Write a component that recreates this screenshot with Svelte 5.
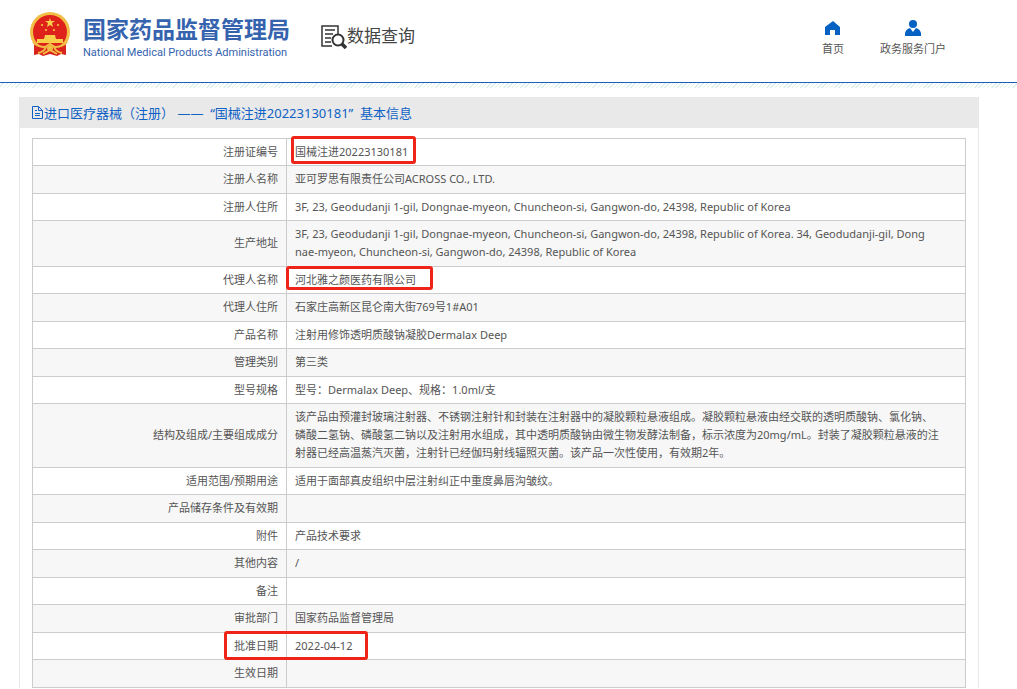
<script lang="ts">
	interface Row {
		label: string;
		value: string;
		mark?: 'number' | 'agent' | 'date';
	}

	const rows: Row[] = [
		{ label: '注册证编号', value: '国械注进20223130181', mark: 'number' },
		{ label: '注册人名称', value: '亚可罗思有限责任公司ACROSS CO., LTD.' },
		{
			label: '注册人住所',
			value: '3F, 23, Geodudanji 1-gil, Dongnae-myeon, Chuncheon-si, Gangwon-do, 24398, Republic of Korea'
		},
		{
			label: '生产地址',
			value:
				'3F, 23, Geodudanji 1-gil, Dongnae-myeon, Chuncheon-si, Gangwon-do, 24398, Republic of Korea. 34, Geodudanji-gil, Dong\nnae-myeon, Chuncheon-si, Gangwon-do, 24398, Republic of Korea'
		},
		{ label: '代理人名称', value: '河北雅之颜医药有限公司', mark: 'agent' },
		{ label: '代理人住所', value: '石家庄高新区昆仑南大街769号1#A01' },
		{ label: '产品名称', value: '注射用修饰透明质酸钠凝胶Dermalax Deep' },
		{ label: '管理类别', value: '第三类' },
		{ label: '型号规格', value: '型号：Dermalax Deep、规格：1.0ml/支' },
		{
			label: '结构及组成/主要组成成分',
			value:
				'该产品由预灌封玻璃注射器、不锈钢注射针和封装在注射器中的凝胶颗粒悬液组成。凝胶颗粒悬液由经交联的透明质酸钠、氯化钠、\n磷酸二氢钠、磷酸氢二钠以及注射用水组成，其中透明质酸钠由微生物发酵法制备，标示浓度为20mg/mL。封装了凝胶颗粒悬液的注\n射器已经高温蒸汽灭菌，注射针已经伽玛射线辐照灭菌。该产品一次性使用，有效期2年。'
		},
		{ label: '适用范围/预期用途', value: '适用于面部真皮组织中层注射纠正中重度鼻唇沟皱纹。' },
		{ label: '产品储存条件及有效期', value: '' },
		{ label: '附件', value: '产品技术要求' },
		{ label: '其他内容', value: '/' },
		{ label: '备注', value: '' },
		{ label: '审批部门', value: '国家药品监督管理局' },
		{ label: '批准日期', value: '2022-04-12', mark: 'date' },
		{ label: '生效日期', value: '' }
	];
</script>

<div class="page">
	<header class="header">
		<div class="brand">
			<svg class="emblem" viewBox="0 0 42 45" aria-hidden="true">
				<path d="M5 30v13l5-1 4 2 7-2 7 2 4-2 5 1V30z" fill="#d9231c" />
				<circle cx="21" cy="20" r="20" fill="#f1bd45" />
				<circle cx="21" cy="20" r="17" fill="#df211b" />
				<path d="m21 6 1 3h4l-3 2 1 4-3-2-3 2 1-4-3-2h4z" fill="#f7cf4a" />
				<g fill="#f7cf4a">
					<circle cx="13" cy="13" r="1" />
					<circle cx="29" cy="13" r="1" />
					<circle cx="17" cy="18" r="1" />
					<circle cx="25" cy="18" r="1" />
					<path d="M16 23h10l1 4h7v4H8v-4h7z" />
				</g>
				<path d="M6 33h30l-4 5-11 3-11-3z" fill="#d9231c" />
				<path
					d="M4 30q5 5 12 5l5-3 5 3q7 0 12-5M9 41q6-1 8-6m8 0q2 5 8 6M14 42l7-4 7 4"
					fill="none"
					stroke="#f1bd45"
					stroke-width="2"
				/>
				<circle cx="21" cy="36" r="3" fill="#f1bd45" />
			</svg>
			<div class="names">
				<span class="name-zh">国家药品监督管理局</span>
				<span class="name-en">National Medical Products Administration</span>
			</div>
		</div>

		<h1 class="section">
			<svg viewBox="0 0 26 25" fill="none" stroke="#333" aria-hidden="true">
				<path d="M17 9V1H1v20h10" stroke-width="1.5" />
				<path d="M4 5h10M4 9h8M4 13h6M4 17h6" stroke-width="1.5" />
				<circle cx="17" cy="15" r="5.5" stroke-width="2" />
				<path d="m21 19 4 4" stroke-width="3.5" />
			</svg>
			<span>数据查询</span>
		</h1>

		<nav class="nav">
			<a href="#home">
				<svg viewBox="0 0 16 16" fill="#0561c2" aria-hidden="true">
					<path d="M8 1 0 7v8h5v-5h5v5h5V7z" />
				</svg>
				首页
			</a>
			<a href="#portal">
				<svg viewBox="0 0 16 16" fill="#0561c2" aria-hidden="true">
					<circle cx="8" cy="4" r="4" />
					<path d="M0 16v-3q1-4 5-5l3 4 3-4q4 1 5 5v3z" />
				</svg>
				政务服务门户
			</a>
		</nav>
	</header>
	<div class="hatch"></div>

	<main class="panel">
		<h2 class="panel-title">
			<svg viewBox="0 0 11 13" fill="none" stroke="currentColor" aria-hidden="true">
				<path d="M.5.5h6l4 4v8H.5zM6.500.5v4h4M3 4.500h2M3 7.500h5M3 9.500h5" />
			</svg>
			<span>进口医疗器械（注册） ——&nbsp; “国械注进20223130181”&nbsp; 基本信息</span>
		</h2>

		<table class="info">
			<tbody>
				{#each rows as row (row.label)}
					<tr>
						<th scope="row">{row.label}</th>
						<td>
							{row.value}{#if row.mark}<span class="mark {row.mark}"></span>{/if}
						</td>
					</tr>
				{/each}
			</tbody>
		</table>
	</main>
</div>

<style>
	:global(body) {
		margin: 0;
		background: #fff;
	}

	.page {
		font-family: 'Noto Sans', 'Noto Sans CJK SC', sans-serif;
		font-size: 11px;
		color: #555;
	}

	.header {
		display: flex;
		align-items: flex-start;
		height: 83px;
		padding: 0 71px 0 29px;
		box-sizing: border-box;
		border-bottom: 1px solid #1c60b3;
	}

	.brand {
		display: flex;
		gap: 12px;
		padding-top: 12px;
	}

	.emblem {
		width: 42px;
		height: 45px;
	}

	.names {
		display: flex;
		flex-direction: column;
		gap: 4px;
		padding-top: 4px;
		color: #3563ae;
	}

	.name-zh {
		font-size: 23px;
		line-height: 26px;
		font-weight: 700;
	}

	.name-en {
		font-family: Roboto, 'Liberation Sans', sans-serif;
		font-size: 11px;
		line-height: 14px;
	}

	.section {
		display: flex;
		margin: 0;
		padding: 25px 0 0 31px;
		font-size: 17px;
		line-height: 22px;
		font-weight: 400;
		color: #444;
	}

	.section svg {
		width: 26px;
		height: 25px;
	}

	.nav {
		display: flex;
		gap: 36px;
		margin-left: auto;
		padding-top: 20px;
	}

	.nav a {
		display: flex;
		flex-direction: column;
		align-items: center;
		gap: 4px;
		line-height: 18px;
		color: #555;
		text-decoration: none;
	}

	.nav svg {
		width: 16px;
		height: 16px;
	}

	.hatch {
		height: 5px;
		background: repeating-linear-gradient(135deg, #fff 0 2px, #dceff0 2px 3px);
	}

	.panel {
		margin: 9px 38px 0 19px;
		border: 1px solid #e8e8e8;
		border-width: 0 1px;
	}

	.panel-title {
		display: flex;
		align-items: center;
		gap: 1px;
		height: 31px;
		margin: 0;
		padding: 0 12px;
		background: #e9e9e9;
		font-size: 13px;
		font-weight: 400;
		color: #0f62c4;
	}

	.panel-title svg {
		width: 11px;
		height: 13px;
	}

	.info {
		width: calc(100% - 24px);
		margin: 10px 12px 0;
		border-collapse: collapse;
		border: 1px solid #ccc;
		table-layout: fixed;
	}

	th,
	td {
		padding: 4px 8px;
		border: 1px solid #ccc;
		line-height: 18px;
		font-weight: 400;
	}

	th {
		width: 237px;
		text-align: right;
	}

	td {
		position: relative;
		height: 18px;
		white-space: pre-line;
	}

	tr:nth-child(even) > * {
		padding-bottom: 5px;
		background: #f7f7f7;
	}

	.mark {
		position: absolute;
		z-index: 1;
		box-sizing: border-box;
		border: 3px solid #ee2419;
		border-radius: 3px;
	}

	.number {
		top: -3px;
		left: 4px;
		width: 125px;
		height: 28px;
	}

	.agent {
		top: -1px;
		left: -1px;
		width: 147px;
		height: 24px;
	}

	.date {
		top: -2px;
		left: -63px;
		width: 144px;
		height: 29px;
	}
</style>
